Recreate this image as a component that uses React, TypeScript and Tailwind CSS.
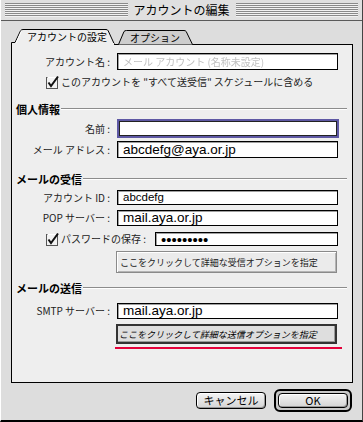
import type { ReactNode } from 'react'

const jp = "font-['Noto_Sans_CJK_JP',sans-serif]"
const latin = "font-['Liberation_Sans',Arial,sans-serif]"

const Check = () => (
  <svg width="13" height="13" viewBox="0 0 13 13" className="shrink-0 overflow-visible">
    <rect x="0.5" y="1.5" width="11" height="11" fill="#f2f2f2" stroke="#555" />
    <path d="M1.5 1.5 H11.5" stroke="#fff" />
    <path d="M2.5 6.5 L5 10 L12 0.5" fill="none" stroke="#111" strokeWidth="2" />
  </svg>
)

const Heading = ({ children, className }: { children: ReactNode; className: string }) => (
  <div className={`flex h-[14px] items-center pl-[4px] pr-[5px] ${className}`}>
    <span className="text-[11px] leading-none font-bold text-black">{children}</span>
    <div className="ml-[1px] flex-1 border-t border-b border-t-[#8c8c8c] border-b-white" />
  </div>
)

const Field = ({ label, className, children }: { label: string; className: string; children: ReactNode }) => (
  <div className={`flex items-center ${className}`}>
    <span className="w-[105px] shrink-0 pr-[7px] text-right text-[10px] leading-none text-[#222]">{label}</span>
    {children}
  </div>
)

// text box; width and height come from the caller
const Box = ({ className, children }: { className: string; children?: ReactNode }) => (
  <div
    className={`flex shrink-0 items-center overflow-hidden border border-black bg-white pl-[5px] shadow-[inset_1px_1px_0_#a0a0a0] ${className}`}
  >
    {children}
  </div>
)

const Stripes = () => (
  <div className="h-[14px] flex-1 bg-[image:repeating-linear-gradient(to_bottom,#8a8a8a_0px,#8a8a8a_1px,#f2f2f2_1px,#f2f2f2_2px)]" />
)

const App = () => {
  return (
    <div
      className={`flex h-[422px] w-[363px] flex-col border-r border-b-2 border-l border-r-[#444] border-b-black border-l-white bg-[#dddddd] ${jp}`}
    >
      {/* title bar */}
      <div className="flex h-[21px] items-center border-b border-[#5a5a5a] bg-[#e0e0e0] px-[4px]">
        <Stripes />
        <span className="px-[6px] text-[12px] leading-none text-black">アカウントの編集</span>
        <Stripes />
      </div>

      <div className="pt-[7px] pl-[10px]">
        {/* tabs */}
        <div className="relative z-10 -mb-px flex h-[17px]">
          <div className="relative h-[17px] w-[107px]">
            <svg width="107" height="17" viewBox="0 0 107 17" className="absolute inset-0">
              <path
                d="M0.5 17 V14.5 H4 L9.5 2.8 Q10.3 1.5 12 1.5 H95 Q96.6 1.5 97.2 2.8 L103.5 16.5 H107"
                fill="#eeeeee"
                stroke="#000"
              />
              <rect x="1" y="15" width="102" height="2" fill="#eeeeee" />
              <path d="M10.5 3 L5 15" stroke="#fff" />
            </svg>
            <span className="absolute top-[4px] left-[16px] text-[10px] leading-none text-black">アカウントの設定</span>
          </div>
          <div className="relative h-[17px] w-[76px]">
            <svg width="76" height="17" viewBox="0 0 76 17" className="absolute inset-0">
              <path
                d="M0.5 16.5 L6 3.5 Q6.8 2.5 8.5 2.5 H66 Q67.5 2.5 68.2 3.5 L74.5 16.5"
                fill="#cdcdcd"
                stroke="#000"
              />
            </svg>
            <span className="absolute top-[5px] left-[12px] text-[10px] leading-none text-black">オプション</span>
          </div>
        </div>

        {/* panel */}
        <div className="flex h-[339px] w-[342px] flex-col border border-black bg-[#eeeeee] pt-[8px]">
          <Field label="アカウント名 :" className="h-[17px]">
            <Box className="h-[17px] w-[221px]">
              <span className="text-[10px] leading-none text-[#c0c0c0] blur-[0.5px]">メール アカウント (名称未設定)</span>
            </Box>
          </Field>

          <div className="mt-[6px] flex h-[12px] items-center pl-[34px]">
            <Check />
            <span className="ml-[2px] text-[10px] leading-none text-[#222]">
              このアカウントを "すべて送受信" スケジュールに含める
            </span>
          </div>

          <Heading className="mt-[14px]">個人情報</Heading>

          <Field label="名前 :" className="mt-[3px] h-[19px]">
            <div className="h-[19px] w-[222px] border-2 border-[#5e58a4] bg-white shadow-[inset_0_0_0_1px_#222]" />
          </Field>

          <Field label="メール アドレス :" className="mt-[3px] h-[17px]">
            <Box className="h-[17px] w-[221px]">
              <span className={`text-[13.5px] leading-none text-black ${latin}`}>abcdefg@aya.or.jp</span>
            </Box>
          </Field>

          <Heading className="mt-[14px]">メールの受信</Heading>

          <Field label="アカウント ID :" className="mt-[4px] h-[15px]">
            <Box className="h-[15px] w-[221px]">
              <span className={`text-[11.5px] leading-none text-black ${latin}`}>abcdefg</span>
            </Box>
          </Field>

          <Field label="POP サーバー :" className="mt-[5px] h-[16px]">
            <Box className="h-[16px] w-[221px]">
              <span className={`text-[13.5px] leading-none text-black ${latin}`}>mail.aya.or.jp</span>
            </Box>
          </Field>

          <div className="mt-[6px] flex h-[14px] items-center pl-[34px]">
            <Check />
            <span className="ml-[2px] w-[94px] shrink-0 text-[10px] leading-none text-[#222]">パスワードの保存 :</span>
            <Box className="h-[14px] w-[183px]">
              <span className={`text-[15px] leading-none text-black ${latin}`}>•••••••••</span>
            </Box>
          </div>

          <button className="mt-[5px] ml-[104px] flex h-[22px] w-[221px] items-center border border-[#8a8a8a] bg-[#ebebeb] pl-[3px] text-[9px] leading-none text-[#222] shadow-[inset_1px_1px_0_#fff,inset_-1px_-1px_0_#b4b4b4]">
            ここをクリックして詳細な受信オプションを指定
          </button>

          <Heading className="mt-[8px]">メールの送信</Heading>

          <Field label="SMTP サーバー :" className="mt-[8px] h-[16px]">
            <Box className="h-[16px] w-[221px]">
              <span className={`text-[13.5px] leading-none text-black ${latin}`}>mail.aya.or.jp</span>
            </Box>
          </Field>

          <button className="mt-[5px] ml-[104px] flex h-[20px] w-[221px] items-center border-2 border-[#333] bg-[#dedede] pl-[1px] text-[9px] leading-none text-black italic shadow-[inset_-1px_-1px_0_#9a9a9a]">
            ここをクリックして詳細な送信オプションを指定
          </button>

          <div className="mt-[3px] ml-[103px] h-[2px] w-[227px] bg-[#e4003a]" />
        </div>
      </div>

      {/* bottom buttons */}
      <div className="mt-[6px] flex items-center justify-end gap-[8px] pr-[10px]">
        <button className="flex h-[17px] w-[70px] items-center justify-center rounded-[4px] border border-black bg-[linear-gradient(#f4f4f4,#d4d4d4)] text-[11px] leading-none text-black shadow-[inset_1px_1px_0_#fff,inset_-1px_-1px_0_#999]">
          キャンセル
        </button>
        <div className="rounded-[6px] border-2 border-black bg-[#c8c8c8] p-[2px]">
          <button className="flex h-[15px] w-[70px] items-center justify-center rounded-[4px] border border-black bg-[linear-gradient(#f4f4f4,#d4d4d4)] text-[11px] leading-none text-black shadow-[inset_1px_1px_0_#fff,inset_-1px_-1px_0_#999]">
            OK
          </button>
        </div>
      </div>
    </div>
  )
}

export default App
